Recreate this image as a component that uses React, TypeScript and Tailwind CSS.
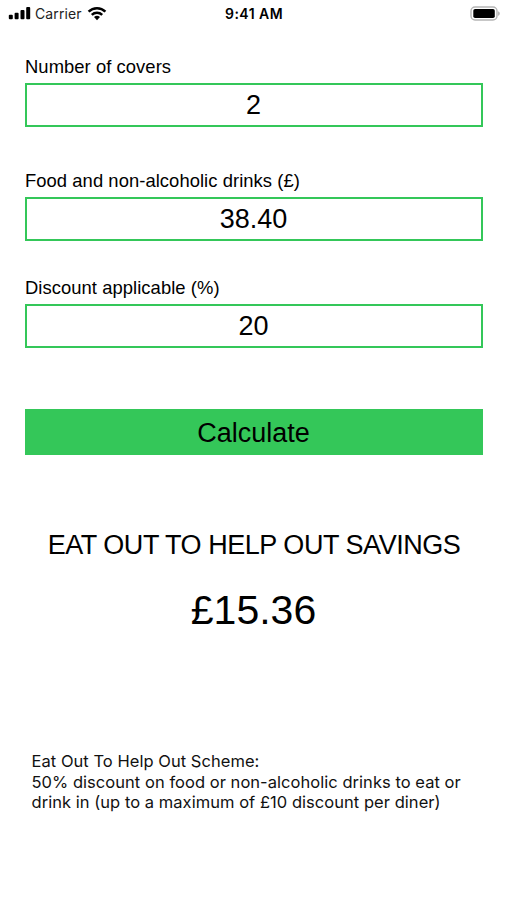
import React, { useState, ChangeEvent, JSX } from "react";

type FieldProps = {
  id: string;
  label: string;
  value: string;
  onChange: (val: string) => void;
};

function Field({ id, label, value, onChange }: FieldProps): JSX.Element {
  function handleChange(e: ChangeEvent<HTMLInputElement>) {
    const val = e.target.value;
    if (val === "" || /^[0-9.]+$/.test(val)) {
      onChange(val);
    }
  }

  return (
    <div>
      <label htmlFor={id} className="block h-[27px] text-[18.4px] leading-[22px] tracking-[0.06px]">
        {label}
      </label>
      <input
        id={id}
        type="text"
        inputMode="decimal"
        value={value}
        onChange={handleChange}
        className="block h-11 w-full border-2 border-[#34c759] pr-px text-center text-[27px] leading-8 focus:outline-none"
      />
    </div>
  );
}

function StatusBar(): JSX.Element {
  return (
    <div className="flex h-7 items-center justify-between pl-2 pr-[7px] font-['Inter','Liberation_Sans',sans-serif]">
      <div className="flex w-[170px] items-center">
        <svg className="-mt-0.5" width="23" height="14" viewBox="0 0 23 14" fill="#000">
          <rect x="0.8" y="8.8" width="4" height="4.4" rx="1" />
          <rect x="6.6" y="6.7" width="4" height="6.5" rx="1" />
          <rect x="12.5" y="4" width="4" height="9.2" rx="1" />
          <rect x="18.2" y="1" width="4" height="12.2" rx="1" />
        </svg>
        <span className="-mt-0.5 ml-[4px] text-[14px] tracking-[0.1px] text-[#222]">Carrier</span>
        <svg className="-mt-0.5 ml-[5px]" width="20" height="15" viewBox="0 0 20 15" fill="none" stroke="#000" strokeWidth="2.5">
          <path d="M1.6 5.6a12 12 0 0 1 16.8 0" />
          <path d="M4.8 8.8a7.5 7.5 0 0 1 10.4 0" />
          <path d="M10 14.2l-3-3.1a4.3 4.3 0 0 1 6 0z" fill="#000" stroke="none" />
        </svg>
      </div>
      <span className="-mt-0.5 text-[14px] font-semibold tracking-[0.45px]">9:41 AM</span>
      <div className="flex w-[170px] justify-end">
        <svg width="30" height="16" viewBox="0 0 30 16">
          <rect x="1" y="1" width="26" height="13" rx="4" fill="none" stroke="#b5b5b5" strokeWidth="1.4" />
          <rect x="3.3" y="3" width="21.5" height="9" rx="1.8" fill="#000" />
          <path d="M28.2 5.2c2 .8 2 3.8 0 4.6z" fill="#aaa" />
        </svg>
      </div>
    </div>
  );
}

export default function SavingsCalculator(): JSX.Element {
  const [covers, setCovers] = useState<string>("2");
  const [spend, setSpend] = useState<string>("38.40");
  const [discount, setDiscount] = useState<string>("20");
  const [savings, setSavings] = useState<string>("15.36");

  // Discount comes off first, then 50% off the rest, capped at £10 per diner
  function handleCalculate() {
    const afterDiscount = Number(spend) * (1 - Number(discount || 0) / 100);
    setSavings(Math.min(afterDiscount / 2, Number(covers) * 10).toFixed(2));
  }

  return (
    <div className="h-[900px] w-[507px] bg-white font-['Liberation_Sans',sans-serif] text-black">
      <StatusBar />
      <main className="pl-[25px] pr-6 pt-7">
        <Field id="covers" label="Number of covers" value={covers} onChange={setCovers} />
        <div className="mt-[43px]">
          <Field id="spend" label="Food and non-alcoholic drinks (£)" value={spend} onChange={setSpend} />
        </div>
        <div className="mt-[36px]">
          <Field id="discount" label="Discount applicable (%)" value={discount} onChange={setDiscount} />
        </div>
        <button onClick={handleCalculate} className="mt-[61px] h-[46px] w-full bg-[#34c759] pr-px pt-[2px] text-[27px] leading-8">
          Calculate
        </button>
        <h1 className="mt-[74px] text-center text-[27px] leading-8 tracking-[-0.46px] whitespace-nowrap">
          EAT OUT TO HELP OUT SAVINGS
        </h1>
        <p className="mt-[25px] pr-px text-center text-[41px] leading-[48px]">£{savings}</p>
        <p className="mt-[117px] pl-[6.5px] font-['Inter','Liberation_Sans',sans-serif] text-[16.5px] leading-[20.5px] tracking-[0.04px] whitespace-nowrap text-[#111]">
          Eat Out To Help Out Scheme:
          <br />
          50% discount on food or non-alcoholic drinks to eat or
          <br />
          drink in (up to a maximum of £10 discount per diner)
        </p>
      </main>
    </div>
  );
}
